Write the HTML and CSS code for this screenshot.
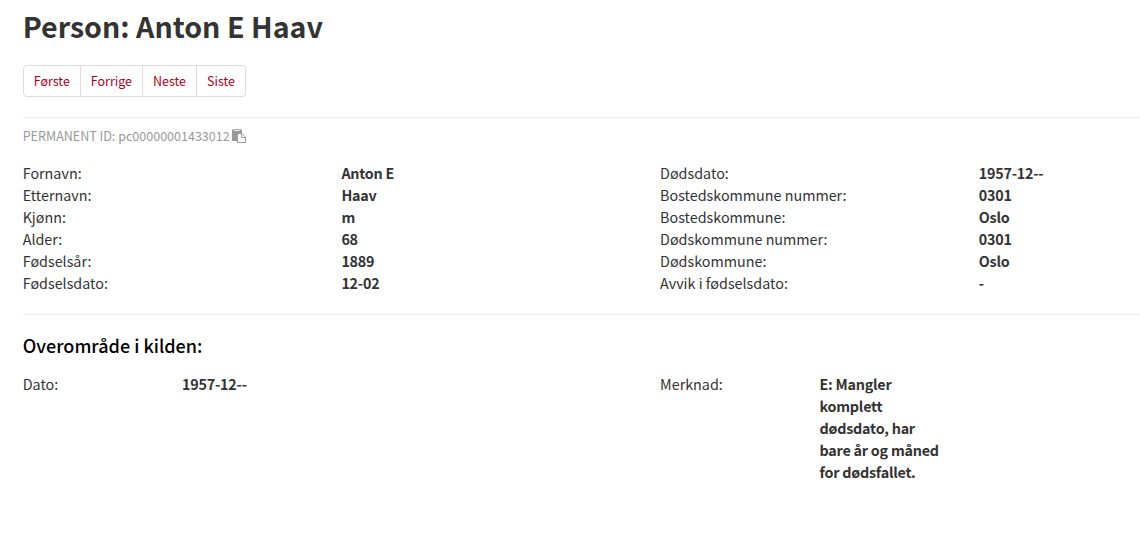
FILE: index.html
```html
<!DOCTYPE html>
<html lang="no">
<head>
    <meta charset="UTF-8">
    <meta name="viewport" content="width=device-width, initial-scale=1.0">
    <title>Person: Anton E Haav</title>
    <link rel="stylesheet" href="styles.css">
</head>
<body>

    <div class="container">
        <h1 class="page-title">Person: Anton E Haav</h1>

        <div class="btn-group">
            <a class="btn">Første</a>
            <a class="btn">Forrige</a>
            <a class="btn">Neste</a>
            <a class="btn">Siste</a>
        </div>

        <hr class="divider">

        <div class="permanent-id">
            <span>PERMANENT ID: pc00000001433012</span>
            <svg class="icon-paste" viewBox="0 0 14 14" width="14" height="14">
                <path d="M0 .5h3V0h4v.5h3V4H5v8H0z" fill="#999"/>
                <path d="M2.500 1h5v1h-5z" fill="#fff"/>
                <path d="M5.500 4.500H10l3.500 3.500v5.500h-8z" fill="#fff" stroke="#999"/>
                <path d="M9.500 4.500V8.500h4" fill="none" stroke="#999"/>
            </svg>
        </div>

        <div class="row">
            <dl class="fields">
                <dt>Fornavn:</dt><dd>Anton E</dd>
                <dt>Etternavn:</dt><dd>Haav</dd>
                <dt>Kjønn:</dt><dd>m</dd>
                <dt>Alder:</dt><dd>68</dd>
                <dt>Fødselsår:</dt><dd>1889</dd>
                <dt>Fødselsdato:</dt><dd>12-02</dd>
            </dl>
            <dl class="fields">
                <dt>Dødsdato:</dt><dd>1957-12--</dd>
                <dt>Bostedskommune nummer:</dt><dd>0301</dd>
                <dt>Bostedskommune:</dt><dd>Oslo</dd>
                <dt>Dødskommune nummer:</dt><dd>0301</dd>
                <dt>Dødskommune:</dt><dd>Oslo</dd>
                <dt>Avvik i fødselsdato:</dt><dd>-</dd>
            </dl>
        </div>

        <hr class="divider">

        <h2 class="section-title">Overområde i kilden:</h2>
        <div class="row">
            <dl class="fields fields-narrow">
                <dt>Dato:</dt><dd>1957-12--</dd>
            </dl>
            <dl class="fields fields-narrow">
                <dt>Merknad:</dt><dd>E: Mangler komplett dødsdato, har bare år og måned for dødsfallet.</dd>
            </dl>
        </div>
    </div>

</body>
</html>
```

FILE: styles.css
```css
/* General Styles */
* {
    box-sizing: border-box;
}

body {
    margin: 0;
    background: #fff;
    color: #333;
    font-family: "Source Sans Pro", "Noto Sans CJK JP", "Noto Sans", sans-serif;
    font-size: 14.33px;
    line-height: 22px;
}

.container {
    padding: 8px 0 0 22.7px;
}

/* Title */
.page-title {
    margin: 0 0 22px;
    font-size: 28.6px;
    line-height: 35px;
    font-weight: 700;
}

/* Navigation buttons */
.btn-group {
    display: inline-flex;
    height: 32px;
    border: 1px solid #ddd;
    border-radius: 4px;
    vertical-align: top;
}

.btn {
    padding: 0 10px;
    color: #b00020;
    font-size: 12.5px;
    line-height: 30px;
}

.btn + .btn {
    border-left: 1px solid #ddd;
}

.divider {
    height: 1px;
    margin: 20px 0 0;
    border: 0;
    background: #eee;
}

/* Permanent ID */
.permanent-id {
    display: flex;
    align-items: center;
    gap: 2px;
    height: 22px;
    margin: 7px 0 15px;
    color: #999;
    font-size: 12.54px;
}

/* Field lists */
.row {
    display: grid;
    grid-template-columns: 637.4px 1fr;
}

.fields {
    display: grid;
    grid-template-columns: 318.7px 1fr;
    align-content: start;
    margin: 0;
}

.fields-narrow {
    grid-template-columns: 159.4px 159.4px;
}

.fields dt {
    padding-right: 30px;
}

.fields dd {
    margin: 0;
    padding-right: 36px;
    font-weight: 600;
    letter-spacing: -0.22px;
}

/* Section heading */
.section-title {
    margin: 19px 0 17px;
    color: #000;
    font-size: 18px;
    line-height: 22px;
    font-weight: 500;
}
```
